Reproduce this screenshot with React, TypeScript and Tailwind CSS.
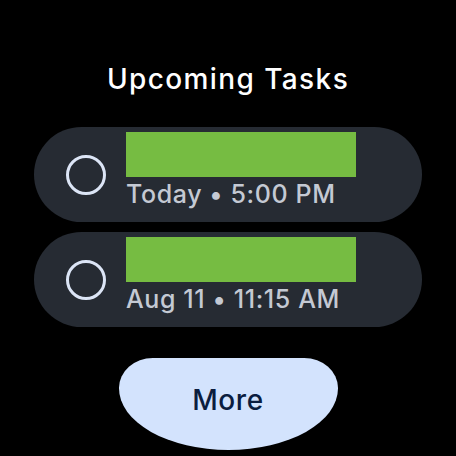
const tasks = [
  { when: "Today • 5:00 PM" },
  { when: "Aug 11 • 11:15 AM" },
];

function TaskRow({ when }: { when: string }) {
  return (
    <div className="flex h-[95px] w-[388px] items-center rounded-full bg-[#262b33] pl-[32px]">
      <div className="h-[40px] w-[40px] shrink-0 rounded-full border-[3px] border-[#dce5f6]" />
      <div className="ml-[20px] flex flex-col self-start pt-[5px]">
        <div className="h-[45px] w-[230px] bg-[#76bc42]" />
        <div className="mt-[2px] text-[25px] font-medium leading-[30px] tracking-[0.6px] text-[#c4c9d3]">
          {when}
        </div>
      </div>
    </div>
  );
}

export default function App() {
  return (
    <div
      className="flex h-[456px] w-[456px] flex-col items-center overflow-hidden bg-black pt-[63px]"
      style={{ fontFamily: "Inter, 'Noto Sans', sans-serif" }}
    >
      <h1 className="text-[28px] font-medium leading-[33px] tracking-[1.4px] text-white">Upcoming Tasks</h1>
      <div className="mt-[31px] flex flex-col gap-[10px]">
        {tasks.map((t) => (
          <TaskRow key={t.when} when={t.when} />
        ))}
      </div>
      <button className="mt-[31px] flex h-[92px] w-[219px] shrink-0 items-center justify-center rounded-[34px_34px_110px_110px/30px_30px_62px_62px] bg-[#d3e3fd] pb-[8px] text-[28px] font-medium tracking-[0.6px] text-[#0b1d3f]">
        More
      </button>
    </div>
  );
}
